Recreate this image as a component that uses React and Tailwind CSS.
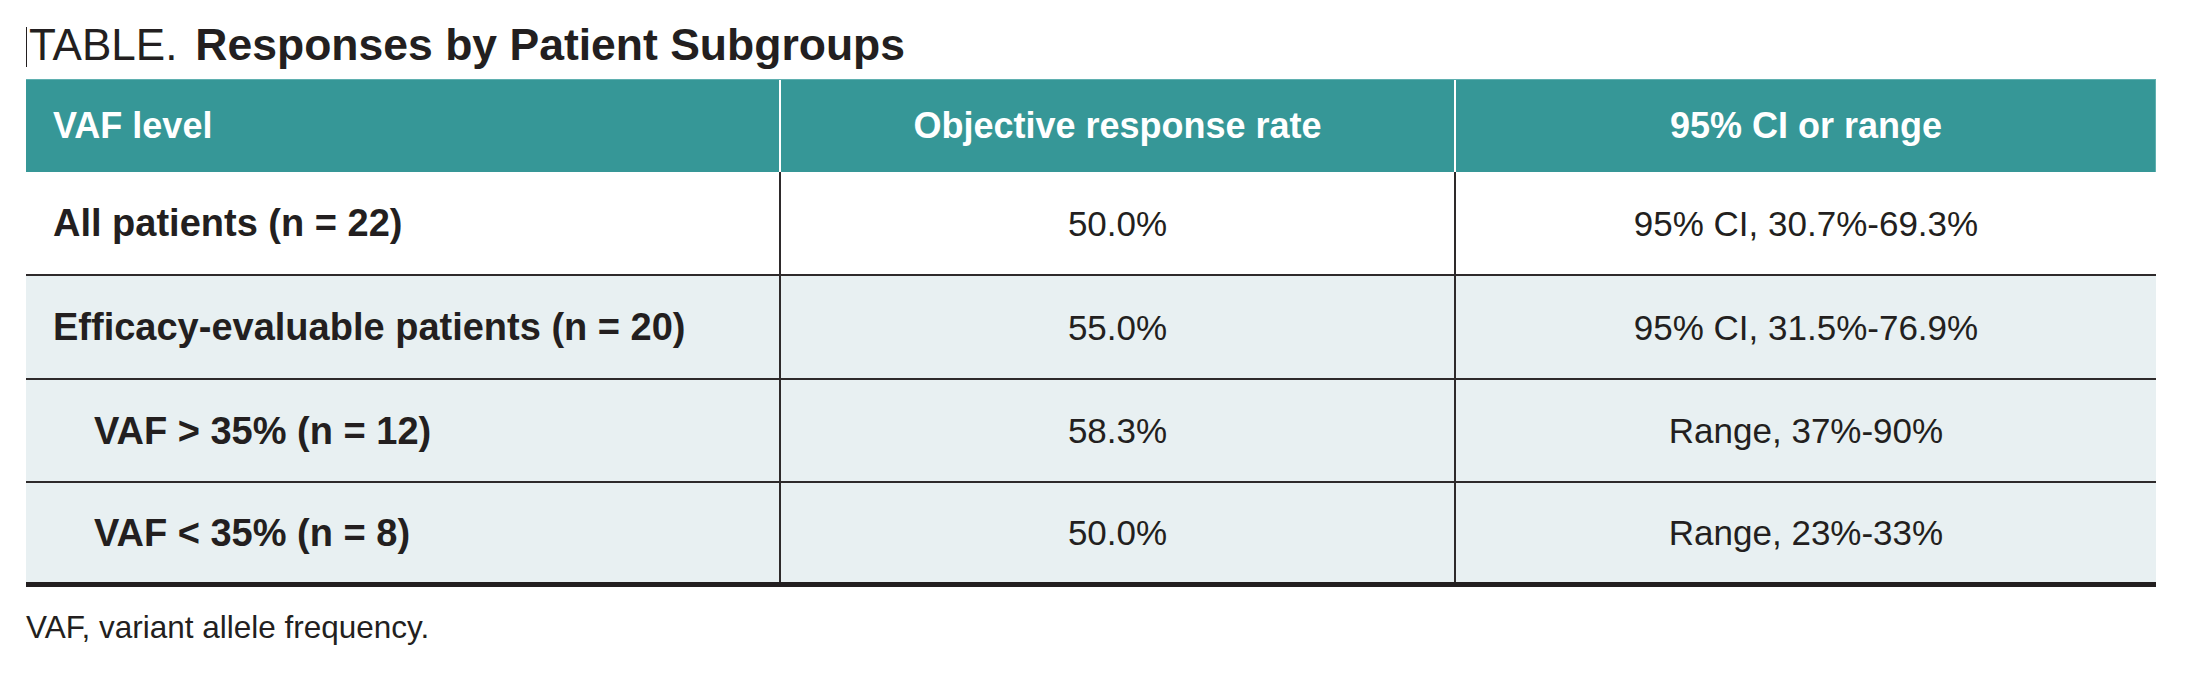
const rows = [
  { label: "All patients (n = 22)", orr: "50.0%", ci: "95% CI, 30.7%-69.3%", indent: false, shaded: false, h: "h-[104px]" },
  { label: "Efficacy-evaluable patients (n = 20)", orr: "55.0%", ci: "95% CI, 31.5%-76.9%", indent: false, shaded: true, h: "h-[104px]" },
  { label: "VAF > 35% (n = 12)", orr: "58.3%", ci: "Range, 37%-90%", indent: true, shaded: true, h: "h-[103px]" },
  { label: "VAF < 35% (n = 8)", orr: "50.0%", ci: "Range, 23%-33%", indent: true, shaded: true, h: "h-[104px]", last: true },
];

function App() {
  return (
    <div
      className="min-h-screen bg-white px-[26px] pt-[23px] text-[#231f20]"
      style={{ fontFamily: '"Liberation Sans", Arial, sans-serif' }}
    >
      {/* title */}
      <div className="flex items-start leading-[44px] text-[44px]">
        <div className="mt-[4px] h-[40px] w-px bg-[#231f20]" />
        <span className="ml-[2px] font-normal">TABLE.</span>
        <span className="ml-[18px] text-[44.5px] font-bold">Responses by Patient Subgroups</span>
      </div>

      {/* table */}
      <div className="mt-[12px] w-[2130px]">
        <div className="grid h-[93px] grid-cols-[753px_675px_702px] border-t border-r border-[#5fb0b0] bg-[#369797] text-[36px] font-bold leading-none text-white">
          <div className="flex items-center pl-[27px]">VAF level</div>
          <div className="flex items-center justify-center border-l-2 border-white">Objective response rate</div>
          <div className="flex items-center justify-center border-l-2 border-white">95% CI or range</div>
        </div>

        {rows.map((r) => (
          <div
            key={r.label}
            className={
              "grid grid-cols-[753px_675px_702px] " +
              r.h +
              " " +
              (r.last ? "border-b-[5px] border-[#231f20] " : "border-b-2 border-[#2e2a2b] ") +
              (r.shaded ? "bg-[#e8f0f2]" : "bg-white")
            }
          >
            <div
              className={
                "flex items-center text-[38px] font-bold leading-none " +
                (r.indent ? "pl-[68px]" : "pl-[27px]")
              }
            >
              {r.label}
            </div>
            <div className="flex items-center justify-center border-l-2 border-[#2e2a2b] text-[35px] leading-none">
              {r.orr}
            </div>
            <div className="flex items-center justify-center border-l-2 border-[#2e2a2b] text-[35px] leading-none">
              {r.ci}
            </div>
          </div>
        ))}
      </div>

      <p className="mt-[24px] text-[31.5px] leading-[32px]">VAF, variant allele frequency.</p>
    </div>
  );
}

export default App;
